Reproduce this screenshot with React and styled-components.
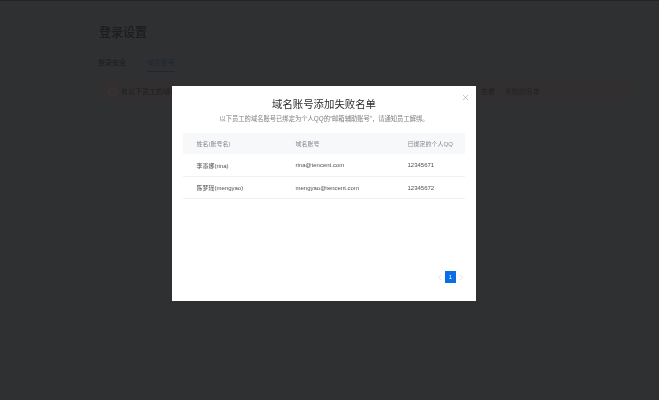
import React from "react";
import styled, { createGlobalStyle } from "styled-components";
import { X, ChevronLeft, ChevronRight } from "lucide-react";

const GlobalStyle = createGlobalStyle`
  html, body {
    margin: 0;
    padding: 0;
    background: #2f3032;
  }
  body {
    font-family: "Liberation Sans", "Noto Sans CJK SC", sans-serif;
  }
`;

const Page = styled.div`
  position: relative;
  width: 659px;
  height: 400px;
  overflow: hidden;
  background: #2f3032;
  filter: blur(0.35px);
`;

const TopLine = styled.div`
  height: 1px;
  background: #232426;
`;

const Content = styled.div`
  padding: 24px 25px 0 98px;
`;

const PageTitle = styled.h1`
  margin: 0 0 0 1px;
  font-size: 12px;
  line-height: 16px;
  font-weight: 400;
  color: #17181a;
`;

const Tabs = styled.div`
  display: flex;
  gap: 21px;
  margin-top: 17px;
  font-size: 7px;
  line-height: 10px;
`;

const Tab = styled.div`
  padding-bottom: 3px;
  border-bottom: 1px solid ${(props) => (props.$active ? "#1d2835" : "transparent")};
  color: ${(props) => (props.$active ? "#1d2835" : "#1c1d1f")};
`;

const Notice = styled.div`
  display: flex;
  align-items: center;
  gap: 4px;
  height: 20px;
  margin: 9px 0 0 2px;
  padding: 0 8px;
  background: #322f31;
  font-size: 7px;
  color: #1e1e20;
`;

const NoticeIcon = styled.span`
  width: 7px;
  height: 7px;
  border: 1px solid #452f30;
  border-radius: 50%;
`;

const NoticeLink = styled.span`
  margin-left: ${(props) => props.$offset}px;
  color: #202327;
`;

const Overlay = styled.div`
  position: absolute;
  inset: 0;
  display: flex;
  justify-content: center;
  box-sizing: border-box;
  padding: 86px 11px 0 0;
`;

const Dialog = styled.div`
  position: relative;
  display: flex;
  flex-direction: column;
  width: 304px;
  height: 215px;
  padding: 12px 11px 0;
  box-sizing: border-box;
  background: #ffffff;
`;

const CloseButton = styled.span`
  position: absolute;
  top: 7px;
  right: 6px;
  display: flex;
  color: #a9abae;
`;

const Title = styled.h2`
  margin: 0;
  text-align: center;
  font-size: 10.4px;
  line-height: 14px;
  font-weight: 400;
  color: #2b2d30;
`;

const Subtitle = styled.p`
  margin: 2px 0 0;
  text-align: center;
  font-size: 6.3px;
  line-height: 9px;
  color: #7c7f84;
`;

const Table = styled.div`
  margin-top: 10px;
  font-size: 6px;
`;

const Row = styled.div`
  display: grid;
  grid-template-columns: 99px 112px 1fr;
  align-items: center;
  box-sizing: border-box;
  height: ${(props) => (props.$head ? "21px" : "22.5px")};
  padding: ${(props) => (props.$head ? "0" : "1px")} 0 0 13.5px;
  background: ${(props) => (props.$head ? "#f7f8fa" : "transparent")};
  border-bottom: ${(props) => (props.$head ? "none" : "1px solid #eff0f2")};
  color: ${(props) => (props.$head ? "#85888d" : "#4c4f53")};
`;

const Pagination = styled.div`
  display: flex;
  align-items: center;
  justify-content: flex-end;
  gap: 1px;
  margin: auto -1px 18px 0;
  color: #dcdee1;
`;

const PageNumber = styled.span`
  display: flex;
  align-items: center;
  justify-content: center;
  width: 11px;
  height: 12px;
  background: #0a6ee6;
  color: #ffffff;
  font-size: 6px;
`;

const rows = [
  ["李墨娜(rina)", "rina@tencent.com", "12345671"],
  ["陈梦瑶(mengyao)", "mengyao@tencent.com", "12345672"],
];

export default function App() {
  return (
    <Page>
      <GlobalStyle />
      <TopLine />
      <Content>
        <PageTitle>登录设置</PageTitle>
        <Tabs>
          <Tab>登录安全</Tab>
          <Tab $active>域名账号</Tab>
        </Tabs>
        <Notice>
          <NoticeIcon />
          有以下员工的域名账号添加失败
          <NoticeLink $offset={258}>查看</NoticeLink>
          <NoticeLink $offset={6}>失败的名单</NoticeLink>
        </Notice>
      </Content>
      <Overlay>
        <Dialog>
          <CloseButton>
            <X size={9} strokeWidth={1.8} />
          </CloseButton>
          <Title>域名账号添加失败名单</Title>
          <Subtitle>以下员工的域名账号已绑定为个人QQ的“邮箱辅助账号”，请通知员工解绑。</Subtitle>
          <Table>
            <Row $head>
              <span>姓名(账号名)</span>
              <span>域名账号</span>
              <span>已绑定的个人QQ</span>
            </Row>
            {rows.map((row) => (
              <Row key={row[1]}>
                <span>{row[0]}</span>
                <span>{row[1]}</span>
                <span>{row[2]}</span>
              </Row>
            ))}
          </Table>
          <Pagination>
            <ChevronLeft size={9} strokeWidth={2.5} />
            <PageNumber>1</PageNumber>
            <ChevronRight size={9} strokeWidth={2.5} />
          </Pagination>
        </Dialog>
      </Overlay>
    </Page>
  );
}
